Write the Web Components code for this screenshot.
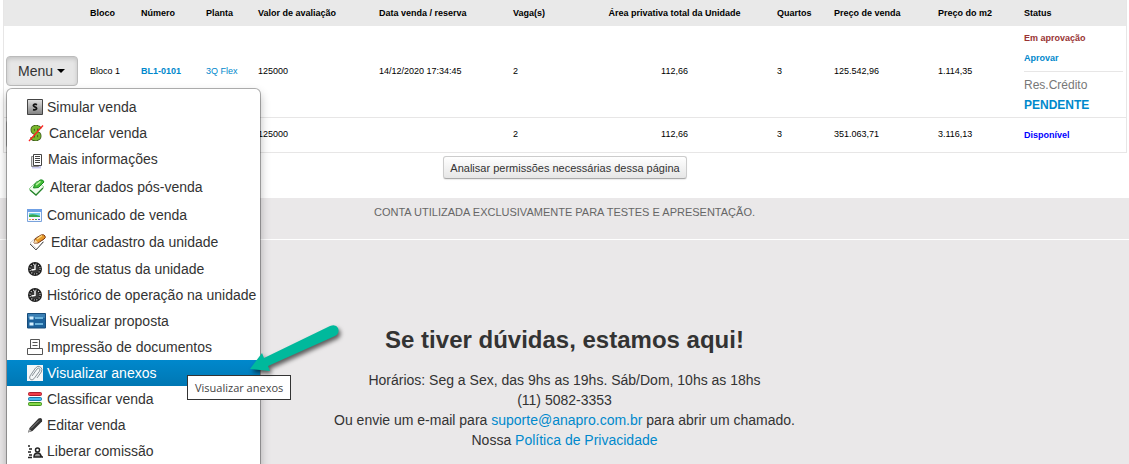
<!DOCTYPE html>
<html lang="pt-BR">
<head>
<meta charset="utf-8">
<title>Unidades</title>
<style>
    html {
        scrollbar-width: none;
    }

    body {
        margin: 0;
        font: 14px/20px "Liberation Sans", Arial, sans-serif;
        color: #333;
    }
</style>
</head>
<body>

<units-page>
    <units-table></units-table>
    <small-button slot="actions">Analisar permissões necessárias dessa página</small-button>
    <span slot="notice">CONTA UTILIZADA EXCLUSIVAMENTE PARA TESTES E APRESENTAÇÃO.</span>
    <support-info slot="footer" mail="suporte@anapro.com.br">
        <span slot="title">Se tiver dúvidas, estamos aqui!</span>
        <span slot="hours">Horários: Seg a Sex, das 9hs as 19hs. Sáb/Dom, 10hs as 18hs</span>
        <span slot="phone">(11) 5082-3353</span>
    </support-info>
</units-page>

<template id="page-template">
<style>
    :host {
        display: flex;
        flex-direction: column;
        min-height: 100vh;
    }

    .content {
        background: #fff;
        padding: 0 2px 0 3px;
    }

    .actions {
        display: flex;
        justify-content: center;
        padding: 3px 0 19px;
    }

    .notice {
        background: #eae8e9;
        border-bottom: 1px solid #fff;
        padding: 4px 0 17px;
        text-align: center;
        font-size: 11px;
        color: #666;
    }

    footer {
        flex: 1;
        background: #eae8e9;
    }
</style>
<div class="content">
    <slot></slot>
    <div class="actions"><slot name="actions"></slot></div>
</div>
<div class="notice"><slot name="notice"></slot></div>
<footer><slot name="footer"></slot></footer>
</template>

<template id="table-template">
<style>
    :host {
        display: block;
    }

    table {
        width: 100%;
        table-layout: fixed;
        border-spacing: 0;
        border: 1px solid #e7e6e6;
        border-width: 0 1px;
        font-size: 9px;
        color: #000;
    }

    th, td {
        padding: 2px 3px;
        text-align: left;
        white-space: nowrap;
    }

    th {
        height: 22px;
        background: #e9e9e9;
    }

    td {
        padding: 1px 3px 3px;
        border-bottom: 1px solid #e7e6e6;
    }

    th:first-child, td:first-child {
        padding-left: 2px;
    }

    .center {
        text-align: center;
    }

    a {
        color: #0088cc;
        text-decoration: none;
    }

    .status {
        padding: 2px 3px;
        font-weight: bold;
    }

    .status div {
        color: #993333;
    }

    .status .credit {
        font-size: 12px;
        font-weight: normal;
        color: #777;
    }

    .status .big {
        font-size: 12px;
        display: block;
    }

    .status hr {
        margin: 3px 0;
        border: 0;
        border-top: 1px solid #e7e6e6;
    }

    .free {
        color: #0000ff;
    }
</style>
<table>
    <colgroup>
        <col style="width: 83px"><col style="width: 51px"><col style="width: 65px"><col style="width: 52px">
        <col style="width: 121px"><col style="width: 134px"><col style="width: 65px"><col style="width: 199px">
        <col style="width: 57px"><col style="width: 104px"><col style="width: 86px"><col>
    </colgroup>
    <thead>
        <tr>
            <th></th><th>Bloco</th><th>Número</th><th>Planta</th><th>Valor de avaliação</th>
            <th>Data venda / reserva</th><th>Vaga(s)</th><th class="center">Área privativa total da Unidade</th>
            <th>Quartos</th><th>Preço de venda</th><th>Preço do m2</th><th>Status</th>
        </tr>
    </thead>
    <tbody>
        <tr>
            <td><drop-menu label="Menu" open></drop-menu></td>
            <td>Bloco 1</td>
            <td><a href="#"><b>BL1-0101</b></a></td>
            <td><a href="#">3Q Flex</a></td>
            <td>125000</td>
            <td>14/12/2020 17:34:45</td>
            <td>2</td>
            <td class="center">112,66</td>
            <td>3</td>
            <td>125.542,96</td>
            <td>1.114,35</td>
            <td class="status">
                <div>Em aprovação</div>
                <div><a href="#">Aprovar</a></div>
                <hr>
                <div class="credit">Res.Crédito</div>
                <a class="big" href="#">PENDENTE</a>
            </td>
        </tr>
        <tr>
            <td><drop-menu label=""></drop-menu></td>
            <td></td>
            <td></td>
            <td></td>
            <td>125000</td>
            <td></td>
            <td>2</td>
            <td class="center">112,66</td>
            <td>3</td>
            <td>351.063,71</td>
            <td>3.116,13</td>
            <td class="status free">Disponível</td>
        </tr>
    </tbody>
</table>
</template>

<template id="menu-template">
<style>
    :host {
        display: block;
        position: relative;
        font-size: 14px;
    }

    button {
        display: flex;
        align-items: center;
        gap: 4px;
        box-sizing: border-box;
        min-width: 72px;
        height: 30px;
        padding: 4px 11px;
        font: inherit;
        color: #333;
        background: linear-gradient(#fff, #e6e6e6);
        border: 1px solid #bbb;
        border-radius: 4px;
        cursor: pointer;
    }

    :host([open]) button {
        background: #e6e6e6;
        box-shadow: inset 0 2px 4px rgba(0, 0, 0, .15);
    }

    .caret {
        border: 4px solid transparent;
        border-top-color: #000;
        border-bottom: 0;
    }

    nav {
        display: none;
        position: absolute;
        top: 100%;
        left: 0;
        z-index: 10;
        margin-top: 2px;
        padding: 5px 0;
        background: #fff;
        border: 1px solid rgba(0, 0, 0, .3);
        border-radius: 6px;
        background-clip: padding-box;
        box-shadow: 0 5px 10px rgba(0, 0, 0, .25);
    }

    :host([open]) nav {
        display: block;
    }
</style>
<button type="button" aria-haspopup="true"><span class="text"></span><span class="caret"></span></button>
<nav></nav>
</template>

<template id="item-template">
<style>
    :host {
        display: block;
        position: relative;
    }

    :host([active]) {
        z-index: 1;
    }

    a {
        display: flex;
        align-items: center;
        gap: 4px;
        padding: 3px 4px 3px 20px;
        line-height: 20px;
        color: #333;
        text-decoration: none;
        white-space: nowrap;
    }

    :host([active]) a, a:hover {
        color: #fff;
        background: linear-gradient(#0088cc, #0077b3);
    }

    svg {
        display: block;
        flex: none;
    }
</style>
<a href="#"><span class="icon"></span><slot></slot></a>
<slot name="over"></slot>
</template>

<template id="tip-template">
<style>
    :host {
        position: absolute;
        top: 15px;
        left: 180px;
        padding: 2px 7px;
        font: 11px/19px "Open Sans", "Noto Sans", sans-serif;
        color: #444;
        background: #fff;
        border: 1px solid #333;
        white-space: nowrap;
    }
</style>
<slot></slot>
</template>

<template id="arrow-template">
<style>
    :host {
        position: absolute;
        top: -38px;
        left: 238px;
    }

    svg {
        display: block;
        filter: drop-shadow(2px 3px 2px rgba(0, 0, 0, .6));
    }
</style>
<svg width="104" height="56" viewBox="0 0 104 56" aria-hidden="true">
    <path d="M5 47 L17 31 L19 36 L85 4 Q91 2 93 6 Q95 11 90 14 L23 44 L25 49 Z" fill="#00b99c"/>
</svg>
</template>

<template id="button-template">
<style>
    :host {
        display: inline-block;
    }

    button {
        display: block;
        height: 23px;
        padding: 0 6px;
        font: 11px/20px "Liberation Sans", Arial, sans-serif;
        color: #333;
        background: linear-gradient(#fff, #e6e6e6);
        border: 1px solid #ccc;
        border-bottom-color: #aaa;
        border-radius: 3px;
        box-shadow: 0 1px 1px rgba(0, 0, 0, .08);
        cursor: pointer;
    }
</style>
<button type="button"><slot></slot></button>
</template>

<template id="support-template">
<style>
    :host {
        display: block;
        padding: 80px 0 14px;
        text-align: center;
    }

    h3 {
        margin: 0 0 10px;
        font-size: 24px;
        line-height: 40px;
    }

    p {
        margin: 0;
    }

    a {
        color: #0088cc;
        text-decoration: none;
    }
</style>
<h3><slot name="title"></slot></h3>
<p><slot name="hours"></slot></p>
<p><slot name="phone"></slot></p>
<p>Ou envie um e-mail para <a class="mail"></a> para abrir um chamado.</p>
<p>Nossa <a href="#">Política de Privacidade</a></p>
</template>

<script>
const clock = `<svg width="16" height="16" viewBox="0 0 16 16">
    <circle cx="8" cy="8" r="7" fill="#1c1c1c"/>
    <circle cx="8" cy="8" r="5" fill="none" stroke="#ddd" stroke-width="1.2" stroke-dasharray="1 1.62"/>
    <circle cx="8" cy="8" r="4" fill="#3a3a3a"/>
    <path d="M8 3.5V8.5L4.5 9" fill="none" stroke="#fff" stroke-width="1.4"/></svg>`;

const icons = {
    simulate: `<svg width="16" height="16" viewBox="0 0 16 16">
        <defs><linearGradient id="g" x2="0" y2="1"><stop stop-color="#e2e2e2"/><stop offset="1" stop-color="#808080"/></linearGradient></defs>
        <path d="M.5.5h15v15H.5z" fill="url(#g)" stroke="#444"/>
        <path d="M10 5.8Q8 4.6 6.8 5.6t.9 2.3q2.400.600 1.800 2T6 10.700" fill="none" stroke="#111" stroke-width="1.7"/></svg>`,
    cancel: `<svg width="18" height="18" viewBox="0 0 18 18">
        <path d="M13 5Q12 3 9 3 5.500 3 5.500 5.800T9 9 12.500 12 9 15 5 13M9 1v16" fill="none" stroke="#3c5a1c" stroke-width="4"/>
        <path d="M13 5Q12 3 9 3 5.500 3 5.500 5.800T9 9 12.500 12 9 15 5 13M9 1.500v15" fill="none" stroke="#7ab82c" stroke-width="2.400"/>
        <path d="M2 17 16 1.500" stroke="#f22" stroke-width="1.300"/></svg>`,
    info: `<svg width="17" height="21" viewBox="0 0 17 21">
        <path d="M5 17h9v2.500H5z" fill="#c9c9f0"/><path d="M4.500 7.500h7v10h-7z" fill="#ddd" stroke="#888"/>
        <path d="M6.500 5.500h8v11h-8z" fill="#fff" stroke="#444"/>
        <path d="M8 7.500h5M8 9.500h5M8 11.500h5M8 13.500h5" stroke="#444"/></svg>`,
    change: `<svg width="19" height="23" viewBox="0 0 19 23">
        <path d="M2 13 10 5l7 6-8 8z" fill="#f0fced" stroke="#9ad39a"/>
        <path d="M3 14l6 5 7-7" fill="none" stroke="#26852b" stroke-width="1.300"/>
        <path d="M6.500 12l1-3.500 5.500-4.500q3-1 4 2l-5.500 5.500z" fill="#42bd38" stroke="#1b8a22"/>
        <path d="M9 8.800 13.500 5.300" stroke="#baf5a0" stroke-width="1.500"/></svg>`,
    notice: `<svg width="16" height="16" viewBox="0 0 16 16">
        <path d="M.5 2.500h14v12H.5z" fill="#f4f8ff" stroke="#7aa3dc"/><path d="M0 2h15v3H0z" fill="#6fa0e5"/>
        <path d="M2 6h11v4H2z" fill="#73cfe8"/><path d="M2 10V8q4-2 11 1v1z" fill="#36a852"/>
        <path d="M2 12.500h2" stroke="#e4b22e"/><path d="M5 12.500h2" stroke="#d55"/>
        <path d="M8 12.500h2" stroke="#4a4"/><path d="M11 12.500h2" stroke="#55c"/></svg>`,
    edit: `<svg width="20" height="22" viewBox="0 0 20 22">
        <path d="M3 12l8-7 6 6-7 7z" fill="#fff" stroke="#ccc"/><path d="M3 13l6 6 7-8" fill="none" stroke="#555"/>
        <path d="M7 12l1-4 6-4q3-1 4 1t-1 3l-6 4z" fill="#e79a2c" stroke="#7a3510"/>
        <path d="M7 12l1-3.500 3 3z" fill="#f5deb0"/><path d="M10 8l5-3.500" stroke="#ffe08a" stroke-width="1.500"/></svg>`,
    clock: clock,
    proposal: `<svg width="19" height="16" viewBox="0 0 19 16">
        <path d="M.5.500h18v14.500H.5z" fill="#1d629b" stroke="#174c7a"/><path d="M1 1h17v4H1z" fill="#3a7fb4"/>
        <path d="M2.500 3.500h4v3h-4zM2.500 9.500h4v3h-4z" fill="#d8f1ff"/><path d="M8 5h8M8 11h8" stroke="#6db4dc" stroke-width="2"/></svg>`,
    print: `<svg width="16" height="16" viewBox="0 0 16 16" fill="#fff" stroke="#555">
        <path d="M3.500 9.500v-9h9v9M5.500 3.500h5M5.500 6.500h5"/><path d="M.5 9.500h15v6H.5z"/></svg>`,
    attach: `<svg width="16" height="16" viewBox="0 0 16 16">
        <path d="M0 0h16v16H0z" fill="#f4f6f7"/>
        <path d="M5 11l5-7q1.500-1.500 2.500-.3t0 2.500l-5.500 7.500q-2 2-3.500.8t-.5-3.500L8.500 3q2.500-3 5-1t.8 5L10 13" fill="none" stroke="#8a9298"/></svg>`,
    classify: `<svg width="16" height="16" viewBox="0 0 16 16">
        <rect x="1.500" y="1.500" width="13" height="3" rx="1" fill="#ee3c48" stroke="#b01c2c"/>
        <rect x="1.500" y="6.500" width="13" height="3" rx="1" fill="#45b6ee" stroke="#1877a8"/>
        <rect x="1.500" y="11.500" width="13" height="3" rx="1" fill="#84d848" stroke="#3d8c1c"/></svg>`,
    pencil: `<svg width="16" height="16" viewBox="0 0 16 16">
        <path d="M1 15.500l1.500-4.500L11.500 1.500q2-1 3 0t.5 3L5.500 14z" fill="#333"/>
        <path d="M4 11.500 12 3.500" stroke="#888"/><path d="M2.500 12 4.500 14 1 15.500z" fill="#aaa"/></svg>`,
    release: `<svg width="16" height="16" viewBox="0 0 16 16" fill="none" stroke="#222" stroke-width="1.500">
        <path d="M1 3h2M2 6h3M1 9h3M2 12h3M1 14.500h4"/><circle cx="10.500" cy="7" r="2"/>
        <path d="M7 14q0-4 3.500-4t3.500 4z" fill="#999"/><path d="M13 12.500l3 2"/></svg>`
};

const options = [
    ["simulate", "Simular venda"],
    ["cancel", "Cancelar venda"],
    ["info", "Mais informações"],
    ["change", "Alterar dados pós-venda"],
    ["notice", "Comunicado de venda"],
    ["edit", "Editar cadastro da unidade"],
    ["clock", "Log de status da unidade"],
    ["clock", "Histórico de operação na unidade"],
    ["proposal", "Visualizar proposta"],
    ["print", "Impressão de documentos"],
    ["attach", "Visualizar anexos"],
    ["classify", "Classificar venda"],
    ["pencil", "Editar venda"],
    ["release", "Liberar comissão"]
];

// base: clones the template into the shadow root
class BaseElement extends HTMLElement {
    constructor(id) {
        super();
        this.attachShadow({ mode: "open" });
        this.shadowRoot.appendChild(document.getElementById(id).content.cloneNode(true));
    }
}

class UnitsPage extends BaseElement {
    constructor() {
        super("page-template");
    }
}

class UnitsTable extends BaseElement {
    constructor() {
        super("table-template");
    }
}

class SmallButton extends BaseElement {
    constructor() {
        super("button-template");
    }
}

class HintTip extends BaseElement {
    constructor() {
        super("tip-template");
    }
}

class PointerArrow extends BaseElement {
    constructor() {
        super("arrow-template");
    }
}

class MenuOption extends BaseElement {
    constructor() {
        super("item-template");
    }

    connectedCallback() {
        this.shadowRoot.querySelector(".icon").innerHTML = icons[this.getAttribute("icon")];
    }
}

class DropMenu extends BaseElement {
    constructor() {
        super("menu-template");
        this.shadowRoot.querySelector("button").addEventListener("click", () => {
            this.toggleAttribute("open");
        });
    }

    connectedCallback() {
        this.shadowRoot.querySelector(".text").textContent = this.getAttribute("label");
        if (!this.hasAttribute("open")) return;

        this.shadowRoot.querySelector("nav").innerHTML = options.map(([icon, text]) => {
            // the hovered option carries the hint and the arrow
            if (icon === "attach") {
                return `<menu-option icon="${icon}" active>${text}
                    <hint-tip slot="over">${text}</hint-tip>
                    <pointer-arrow slot="over"></pointer-arrow></menu-option>`;
            }
            return `<menu-option icon="${icon}">${text}</menu-option>`;
        }).join("");
    }
}

class SupportInfo extends BaseElement {
    constructor() {
        super("support-template");
    }

    connectedCallback() {
        const link = this.shadowRoot.querySelector(".mail");
        link.textContent = this.getAttribute("mail");
        link.href = "mailto:" + this.getAttribute("mail");
    }
}

customElements.define("hint-tip", HintTip);
customElements.define("pointer-arrow", PointerArrow);
customElements.define("menu-option", MenuOption);
customElements.define("drop-menu", DropMenu);
customElements.define("small-button", SmallButton);
customElements.define("units-table", UnitsTable);
customElements.define("support-info", SupportInfo);
customElements.define("units-page", UnitsPage);
</script>
</body>
</html>
